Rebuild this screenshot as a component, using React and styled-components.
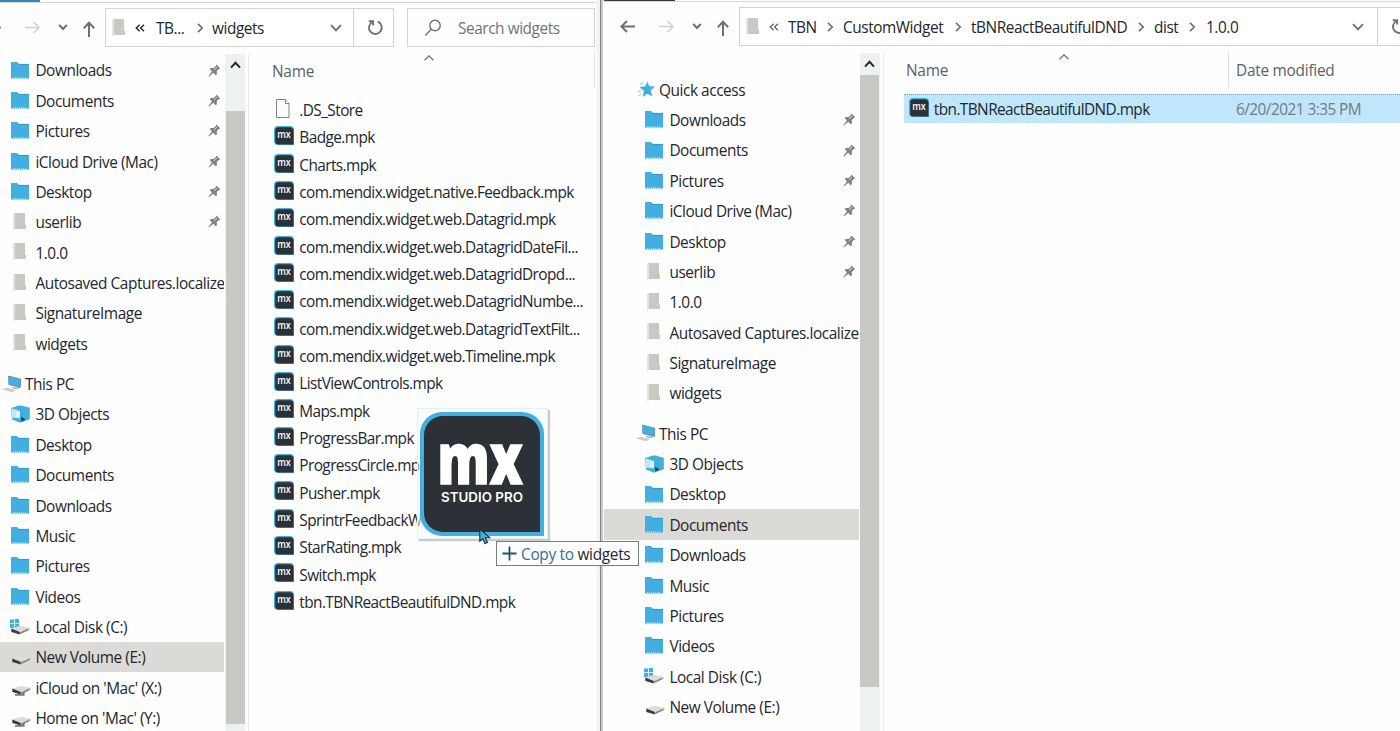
import React from "react";
import styled, { createGlobalStyle } from "styled-components";

const GlobalStyle = createGlobalStyle`
  * { box-sizing: border-box; }
  html, body { margin: 0; padding: 0; overflow: hidden; background: #fff; }
  body {
    font-family: "Open Sans", "Noto Sans", sans-serif;
    font-size: 15.4px;
    letter-spacing: -0.44px;
    color: #22272c;
  }
  svg { display: block; flex: none; }
`;

const Desktop = styled.div`
  position: relative;
  width: 1400px;
  height: 731px;
  display: flex;
  overflow: hidden;
  background: #fefefe;
`;

const Window = styled.section`
  flex: none;
  width: ${(p) => p.$width}px;
  height: 731px;
  display: flex;
  flex-direction: column;
  overflow: hidden;
`;

const WindowEdge = styled.div`
  flex: none;
  width: 8px;
  height: 731px;
  background: linear-gradient(to right, #f8faf9 0 1px, #eff3f1 1px 4px, #7e8587 4px 5px, #c9c9c5 5px 7px, #fefefe 7px);
`;

const TitleStrip = styled.div`
  flex: none;
  height: ${(p) => p.$height}px;
  border-bottom: 1px solid #d6d7d4;
`;

const ActiveTab = styled.div`
  width: ${(p) => p.$width}px;
  height: ${(p) => p.$height}px;
  background: ${(p) => p.$color};
`;

const Toolbar = styled.div`
  flex: none;
  height: ${(p) => p.$height}px;
  padding-top: ${(p) => p.$top}px;
  display: flex;
  align-items: flex-start;
`;

const NavButtons = styled.div`
  flex: none;
  width: ${(p) => p.$width}px;
  height: 38px;
  overflow: hidden;
`;

const AddressBar = styled.div`
  flex: none;
  width: ${(p) => p.$width}px;
  height: 39px;
  border: 1px solid #d3d4d1;
  display: flex;
  align-items: center;
  padding-left: 5px;
  background: #fff;
`;

const Crumb = styled.span`
  flex: none;
  width: ${(p) => p.$width}px;
  padding-top: 1px;
  white-space: nowrap;
`;

const CrumbGap = styled.span`
  flex: none;
  width: ${(p) => p.$width}px;
  display: flex;
`;

const BarButton = styled.div`
  height: 37px;
  width: 40px;
  margin-left: ${(p) => p.$gap}px;
  border-left: 1px solid #d3d4d1;
  display: flex;
  align-items: center;
  padding-left: 13px;
  flex: none;
`;

const SearchBox = styled.div`
  flex: none;
  width: 188px;
  height: 39px;
  margin-left: 13px;
  border: 1px solid #d3d4d1;
  display: flex;
  align-items: center;
  gap: 16px;
  padding-left: 16px;
  color: #6d7578;
`;

const SearchText = styled.span`
  padding-top: 2px;
`;

const Body = styled.div`
  flex: 1;
  min-height: 0;
  display: flex;
`;

const NavTree = styled.nav`
  flex: none;
  width: ${(p) => p.$width}px;
  padding-top: ${(p) => p.$top}px;
  overflow: hidden;
`;

const TreeRow = styled.div`
  height: 30.36px;
  margin-top: ${(p) => (p.$section ? 10 : 0)}px;
  padding-left: ${(p) => p.$indent}px;
  display: flex;
  align-items: center;
  background: ${(p) => (p.$active ? "#dbdad7" : "transparent")};
`;

const IconSlot = styled.span`
  flex: none;
  width: ${(p) => p.$width}px;
  display: flex;
`;

const Label = styled.span`
  flex: 1;
  min-width: 0;
  padding-top: 1.6px;
  white-space: nowrap;
  line-height: 25px;
`;

const FileLabel = styled(Label)`
  letter-spacing: -0.58px;
`;

const PinSlot = styled.span`
  flex: none;
  width: 16px;
  display: flex;
`;

const ScrollTrack = styled.div`
  flex: none;
  width: 20px;
  margin-left: 1px;
  background: #eef2ef;
  display: flex;
  flex-direction: column;
  align-items: center;
`;

const ScrollArrow = styled.div`
  flex: none;
  height: ${(p) => p.$height}px;
  padding-top: 7px;
`;

const ScrollThumb = styled.div`
  flex: none;
  width: 19px;
  height: ${(p) => p.$height}px;
  background: #c8c8c4;
`;

const Divider = styled.div`
  flex: none;
  margin-left: 3px;
  width: 1px;
  background: #e9ebe9;
`;

const FilePane = styled.main`
  flex: 1;
  min-width: 0;
`;

const HeaderRow = styled.div`
  height: ${(p) => p.$height}px;
  display: flex;
  color: #596267;
`;

const HeaderCell = styled.div`
  flex: none;
  width: ${(p) => p.$width}px;
  height: 34px;
  padding-left: ${(p) => p.$pad}px;
  border-right: ${(p) => (p.$last ? "none" : "1px solid #dfe0de")};
  display: flex;
  align-items: flex-start;
`;

const HeaderText = styled.span`
  line-height: 20px;
  margin-top: 8px;
  width: ${(p) => p.$width}px;
  white-space: nowrap;
  letter-spacing: -0.25px;
`;

const SortSlot = styled.span`
  padding-top: 1px;
`;

const FileRow = styled.div`
  height: 27.33px;
  padding-left: 25px;
  display: flex;
  align-items: center;
`;

const FileIcon = styled.span`
  flex: none;
  width: 25.3px;
  padding-bottom: 1.6px;
  display: flex;
`;

const SelectedFile = styled.div`
  height: 29px;
  margin-left: 20px;
  padding-left: 5px;
  border-top: 1px dotted #45b0e3;
  background: #c0e6fb;
  display: flex;
  align-items: center;
`;

const FileDate = styled.span`
  flex: none;
  width: 164px;
  color: #737b7e;
  white-space: nowrap;
  letter-spacing: -0.55px;
`;

const DragPreview = styled.div`
  position: absolute;
  left: 417px;
  top: 408px;
  width: 131px;
  height: 131px;
  padding: 3px 2px;
  border: 1px solid #e6eff3;
  background: rgba(240, 249, 253, 0.55);
  box-shadow: 2px 2px 1px #c9cbc9;
`;

const DropHint = styled.div`
  position: absolute;
  left: 496px;
  top: 541px;
  width: 143px;
  height: 25px;
  border: 1px solid #767d80;
  background: #fff;
  display: flex;
  align-items: center;
  gap: 4px;
  padding-left: 5px;
  white-space: nowrap;
  letter-spacing: -0.3px;
`;

const HintText = styled.span`
  padding-top: 1px;
`;

const HintAction = styled.span`
  color: #2b6f9f;
`;

const Pointer = styled.div`
  position: absolute;
  left: 479px;
  top: 528px;
`;

const Line = ({ w, h, d, color = "#6a7275", sw = 1.7 }) => (
  <svg width={w} height={h} viewBox={`0 0 ${w} ${h}`} fill="none" stroke={color} strokeWidth={sw}>
    <path d={d} />
  </svg>
);

const ChevronRight = () => <Line w={7} h={10} d="M1 .8 5.2 5 1 9.2" />;
const ChevronDown = () => <Line w={12} h={8} d="M1 1.2 6 6.4 11 1.2" sw={1.9} />;
const ChevronUp = () => <Line w={11} h={8} d="M1 6.6 5.5 1.8 10 6.6" color="#22272c" sw={2} />;
const SortMark = () => <Line w={10} h={6} d="M.6 5.3 5 .9 9.4 5.3" sw={1.3} />;
const DoubleLeft = ({ color }) => <Line w={10} h={8} d="M4.7 .7 1.3 4l3.4 3.3M9 .7 5.6 4 9 7.3" color={color} sw={1.5} />;

const Refresh = () => (
  <svg width="17" height="17" viewBox="0 0 17 17" fill="none" stroke="#6a7275" strokeWidth="1.9">
    <path d="M10.8 2.7A6.4 6.4 0 1 1 5.3 3" />
    <path d="M1.8 2.2h4.3v4.2" />
  </svg>
);

const SearchIcon = () => (
  <svg width="18" height="18" viewBox="0 0 18 18" fill="none" stroke="#6d7578" strokeWidth="1.4">
    <circle cx="11" cy="6.5" r="5.2" />
    <path d="M7.3 10.3 1.2 16.4" />
  </svg>
);

const Arrows = ({ offset, back }) => (
  <svg width="140" height="38" viewBox={`${offset} 0 140 38`} fill="none" strokeWidth="2" stroke="#6a7275">
    {back ? <path d="M31 19.5H17M23 14l-5.6 5.5L23 25" /> : <path d="M30 19.5h.8" />}
    <path d="M55 19.5h14M63.5 14l5.6 5.5-5.6 5.5" stroke="#cfd1cf" strokeWidth="1.5" />
    <path d="M89.2 17l3.8 4 3.8-4" />
    <path d="M119 29V14.6M113.8 20.2l5.2-5.4 5.2 5.4" />
  </svg>
);

const Folder = () => (
  <svg width="18" height="17" viewBox="0 0 18 17">
    <path d="M0 0h6l2 2h10v14.5H0z" fill="#43afe1" />
    <path d="M7 2.4h11" stroke="#3494c4" strokeWidth=".9" />
    <path d="M2 15.5h14" stroke="#a5daf2" strokeDasharray="1 1" />
  </svg>
);

const GreyFolder = () => (
  <svg width="14" height="18" viewBox="0 0 14 18">
    <path d="M1 1.2 3 0h10v11l1 1V16H2.4L1 17.6z" fill="#c9c9c4" />
    <path d="M1 1.2 3 0V16l-2 1.6z" fill="#e4e5e1" />
  </svg>
);

const Star = () => (
  <svg width="19" height="17" viewBox="0 0 19 17">
    <path d="M10.5.5l1.8 4.7 6 .2-4.6 3.9 1.8 6.2-5-2.8-5 3.4 1.5-6L2.3 6l5.8-.8z" fill="#43afe1" />
    <path d="M6 2 3 3.5M3.6 9.5 1 11.2M4 13l-2.5 2" stroke="#a8dbf2" strokeWidth="1.5" />
  </svg>
);

const Computer = () => (
  <svg width="20" height="18" viewBox="0 0 20 18">
    <path d="M6.5 1l12.3 3.2-.4 8.2L6.8 9.6z" fill="#43afe1" stroke="#4c7082" strokeWidth=".6" />
    <path d="M10 12.3l4 1.2 3-1" stroke="#aaaeac" fill="none" strokeWidth="1.4" />
    <path d="M0 14.2l5-1.4L14 15.2l-4 2z" fill="#cacbc7" />
  </svg>
);

const Cube = () => (
  <svg width="19" height="18" viewBox="0 0 19 18">
    <path d="M0 3 9 .3l9.8 2.5v11.5L9 17.7 1 14.5z" fill="#43afe1" />
    <path d="M.5 3.2 9 6v7.2L.5 12.8z" fill="#bfe5f7" />
    <path d="M5 7h4v5H5z" fill="#e5f4fb" />
    <path d="M10 11.5l4.6 3-4.2 2.2z" fill="#1c435a" />
  </svg>
);

const Drive = ({ kind }) => (
  <svg width="20" height="18" viewBox="0 0 20 18">
    {kind === "windows" && <path d="M0 1.5h4v3.8H0zM4.8 1H9v4.3H4.8zM0 6.1h4v3.8H0zM4.8 6.1H9v4.3H4.8z" fill="#43afe1" />}
    <path d="M1.3 10.5 10 7.8l9.4 2-9.5 4.1z" fill="#dcddd9" />
    <path d="M1.3 10.5l8.6 3.4v2.6l-8.6-2.6z" fill="#343c40" />
    <path d="M9.9 13.9l9.5-4.1v2.2l-9.5 4.5z" fill="#a8aaa7" />
    <path d="M11 14.8l7-3.2" stroke="#5e6568" strokeDasharray="1.4 1" />
    {kind === "network" && <path d="M4 16h7v-2h2.6v3.8H4z" fill="#757b7e" />}
  </svg>
);

const Pin = () => (
  <svg width="13" height="13" viewBox="0 0 13 13">
    <path d="M8.4.6l4 3.8-1.6.5-2 2.2.1 3.3-1.3.8-2.3-2.5L1 12.5l-.6-.5 3.5-4.5L1.7 5l1-1.1 3 .2 2.2-2z" fill="#7c8386" />
    <path d="M6 6l3-3" stroke="#d5d8d8" />
  </svg>
);

const PageIcon = () => (
  <svg width="16" height="19" viewBox="0 0 16 19" fill="#fbfcfb" stroke="#7c8385">
    <path d="M2.5 .5h9l3.5 4v14H2.5z" />
    <path d="M11.5.5v4H15" />
  </svg>
);

const MxIcon = () => (
  <svg width="20" height="20" viewBox="0 0 20 20">
    <path d="M4 0h12a4 4 0 0 1 4 4v15H4a4 4 0 0 1-4-4V4a4 4 0 0 1 4-4z" fill="#43afe1" />
    <path d="M4.5 1.2h11.3a3.7 3.7 0 0 1 3.7 3.7v13.6H4.5a3.3 3.3 0 0 1-3.3-3.3V4.5a3.3 3.3 0 0 1 3.3-3.3z" fill="#2c3037" />
    <text x="3.2" y="12" fontSize="11.2" fontWeight="600" textLength="13.6" lengthAdjust="spacingAndGlyphs" fill="#fff" letterSpacing="0">mx</text>
  </svg>
);

const StudioLogo = () => (
  <svg width="124" height="124" viewBox="0 0 124 124">
    <path d="M22 0h80a22 22 0 0 1 22 22v102H22a22 22 0 0 1-22-22V22A22 22 0 0 1 22 0z" fill="#43afe1" />
    <path d="M23 4h78a19 19 0 0 1 19 19v97H23A19 19 0 0 1 4 101V23A19 19 0 0 1 23 4z" fill="#2c3037" />
    <text x="17.5" y="71.5" fontSize="71" fontWeight="800" textLength="85" lengthAdjust="spacingAndGlyphs" fill="#fff" stroke="#fff" strokeWidth="1.6" letterSpacing="0">mx</text>
    <text x="21" y="89.5" fontFamily="Inter, sans-serif" fontSize="13.6" fontWeight="600" textLength="82" lengthAdjust="spacingAndGlyphs" fill="#fff" letterSpacing="0">STUDIO PRO</text>
  </svg>
);

const icons = {
  folder: <Folder />,
  grey: <GreyFolder />,
  star: <Star />,
  pc: <Computer />,
  cube: <Cube />,
  windows: <Drive kind="windows" />,
  drive: <Drive />,
  network: <Drive kind="network" />,
};

const quick = [
  ["folder", "Downloads", true],
  ["folder", "Documents", true],
  ["folder", "Pictures", true],
  ["folder", "iCloud Drive (Mac)", true],
  ["folder", "Desktop", true],
  ["grey", "userlib", true],
  ["grey", "1.0.0"],
  ["grey", "Autosaved Captures.localize"],
  ["grey", "SignatureImage"],
  ["grey", "widgets"],
];

const computer = [
  ["cube", "3D Objects"],
  ["folder", "Desktop"],
  ["folder", "Documents"],
  ["folder", "Downloads"],
  ["folder", "Music"],
  ["folder", "Pictures"],
  ["folder", "Videos"],
  ["windows", "Local Disk (C:)"],
  ["drive", "New Volume (E:)"],
  ["network", "iCloud on 'Mac' (X:)"],
  ["network", "Home on 'Mac' (Y:)"],
];

const files = [
  ".DS_Store",
  "Badge.mpk",
  "Charts.mpk",
  "com.mendix.widget.native.Feedback.mpk",
  "com.mendix.widget.web.Datagrid.mpk",
  "com.mendix.widget.web.DatagridDateFil...",
  "com.mendix.widget.web.DatagridDropd...",
  "com.mendix.widget.web.DatagridNumbe...",
  "com.mendix.widget.web.DatagridTextFilt...",
  "com.mendix.widget.web.Timeline.mpk",
  "ListViewControls.mpk",
  "Maps.mpk",
  "ProgressBar.mpk",
  "ProgressCircle.mpk",
  "Pusher.mpk",
  "SprintrFeedbackW",
  "StarRating.mpk",
  "Switch.mpk",
  "tbn.TBNReactBeautifulDND.mpk",
];

const iconShift = { folder: 0, grey: 1, cube: 0, windows: -1, drive: -0.5, network: -0.5 };

function Leaf({ icon, text, pinned, indent, active }) {
  const shift = iconShift[icon];
  return (
    <TreeRow $indent={indent + shift} $active={active}>
      <IconSlot $width={24.4 - shift}>{icons[icon]}</IconSlot>
      <Label>{text}</Label>
      {pinned && <PinSlot><Pin /></PinSlot>}
    </TreeRow>
  );
}

function Group({ icon, text, indent, section, slot }) {
  return (
    <TreeRow $indent={indent} $section={section}>
      <IconSlot $width={slot}>{icons[icon]}</IconSlot>
      <Label>{text}</Label>
    </TreeRow>
  );
}

function Tree({ width, top, indent, activeName, showQuick, items = computer }) {
  return (
    <NavTree $width={width} $top={top}>
      {showQuick && <Group icon="star" text="Quick access" indent={indent - 8.5} slot={22.5} />}
      {quick.map(([icon, text, pinned]) => (
        <Leaf key={text} icon={icon} text={text} pinned={pinned} indent={indent} />
      ))}
      <Group icon="pc" text="This PC" indent={indent - 9.5} slot={23.5} section />
      {items.map(([icon, text]) => (
        <Leaf key={text} icon={icon} text={text} indent={indent} active={text === activeName} />
      ))}
    </NavTree>
  );
}

function Scrollbar({ arrow, thumb }) {
  return (
    <ScrollTrack>
      <ScrollArrow $height={arrow}><ChevronUp /></ScrollArrow>
      <ScrollThumb $height={thumb} />
    </ScrollTrack>
  );
}

function LeftWindow() {
  return (
    <Window $width={596}>
      <TitleStrip $height={3}>
        <ActiveTab $width={40} $height={2} $color="#3089b5" />
      </TitleStrip>
      <Toolbar $height={51} $top={5}>
        <NavButtons $width={105}><Arrows offset={30} /></NavButtons>
        <AddressBar $width={289}>
          <CrumbGap $width={24}><GreyFolder /></CrumbGap>
          <CrumbGap $width={21}><DoubleLeft color="#22272c" /></CrumbGap>
          <Crumb $width={41}>TB...</Crumb>
          <CrumbGap $width={15}><ChevronRight /></CrumbGap>
          <Crumb $width={118}>widgets</Crumb>
          <ChevronDown />
          <BarButton $gap={11}><Refresh /></BarButton>
        </AddressBar>
        <SearchBox><SearchIcon /><SearchText>Search widgets</SearchText></SearchBox>
      </Toolbar>
      <Body>
        <Tree width={224} top={1} indent={11} activeName="New Volume (E:)" />
        <Scrollbar arrow={57} thumb={613} />
        <Divider />
        <FilePane>
          <HeaderRow $height={42}>
            <HeaderCell $width={346} $pad={23}>
              <HeaderText $width={152}>Name</HeaderText>
              <SortSlot><SortMark /></SortSlot>
            </HeaderCell>
          </HeaderRow>
          {files.map((name, i) => (
            <FileRow key={name}>
              <FileIcon>{i === 0 ? <PageIcon /> : <MxIcon />}</FileIcon>
              <FileLabel>{name}</FileLabel>
            </FileRow>
          ))}
        </FilePane>
      </Body>
    </Window>
  );
}

function RightWindow() {
  return (
    <Window $width={796}>
      <TitleStrip $height={2}>
        <ActiveTab $width={71} $height={1} $color="#34393e" />
      </TitleStrip>
      <Toolbar $height={51} $top={5}>
        <NavButtons $width={135}><Arrows offset={0} back /></NavButtons>
        <AddressBar $width={700}>
          <CrumbGap $width={24}><GreyFolder /></CrumbGap>
          <CrumbGap $width={19}><DoubleLeft color="#6a7275" /></CrumbGap>
          <Crumb $width={39}>TBN</Crumb>
          <CrumbGap $width={16}><ChevronRight /></CrumbGap>
          <Crumb $width={112}>CustomWidget</Crumb>
          <CrumbGap $width={16}><ChevronRight /></CrumbGap>
          <Crumb $width={167}>tBNReactBeautifulDND</Crumb>
          <CrumbGap $width={16}><ChevronRight /></CrumbGap>
          <Crumb $width={35}>dist</Crumb>
          <CrumbGap $width={17}><ChevronRight /></CrumbGap>
          <Crumb $width={146}>1.0.0</Crumb>
          <ChevronDown />
          <BarButton $gap={13}><Refresh /></BarButton>
        </AddressBar>
      </Toolbar>
      <Body>
        <Tree width={254.5} top={21.3} indent={41} activeName="Documents" showQuick items={computer.slice(0, 10)} />
        <Scrollbar arrow={22} thumb={612} />
        <Divider />
        <FilePane>
          <HeaderRow $height={41}>
            <HeaderCell $width={345.5} $pad={22.5}>
              <HeaderText $width={153}>Name</HeaderText>
              <SortSlot><SortMark /></SortSlot>
            </HeaderCell>
            <HeaderCell $width={160} $pad={7} $last>
              <HeaderText $width={150}>Date modified</HeaderText>
            </HeaderCell>
          </HeaderRow>
          <SelectedFile>
            <FileIcon><MxIcon /></FileIcon>
            <FileLabel>tbn.TBNReactBeautifulDND.mpk</FileLabel>
            <FileDate>6/20/2021 3:35 PM</FileDate>
          </SelectedFile>
        </FilePane>
      </Body>
    </Window>
  );
}

export default function App() {
  return (
    <>
      <GlobalStyle />
      <Desktop>
        <LeftWindow />
        <WindowEdge />
        <RightWindow />
        <DragPreview><StudioLogo /></DragPreview>
        <DropHint>
          <Line w={15} h={15} d="M7.5 .5v14M.5 7.5h14" color="#23506e" sw={1.8} />
          <HintText><HintAction>Copy to</HintAction> widgets</HintText>
        </DropHint>
        <Pointer>
          <svg width="12" height="17" viewBox="0 0 12 17">
            <path d="M.8 1v12.2l3-2.6 2.1 5 2.6-1.1-2.1-4.8h4.3z" fill="#43afe1" stroke="#1c3140" strokeWidth="1.1" />
          </svg>
        </Pointer>
      </Desktop>
    </>
  );
}
